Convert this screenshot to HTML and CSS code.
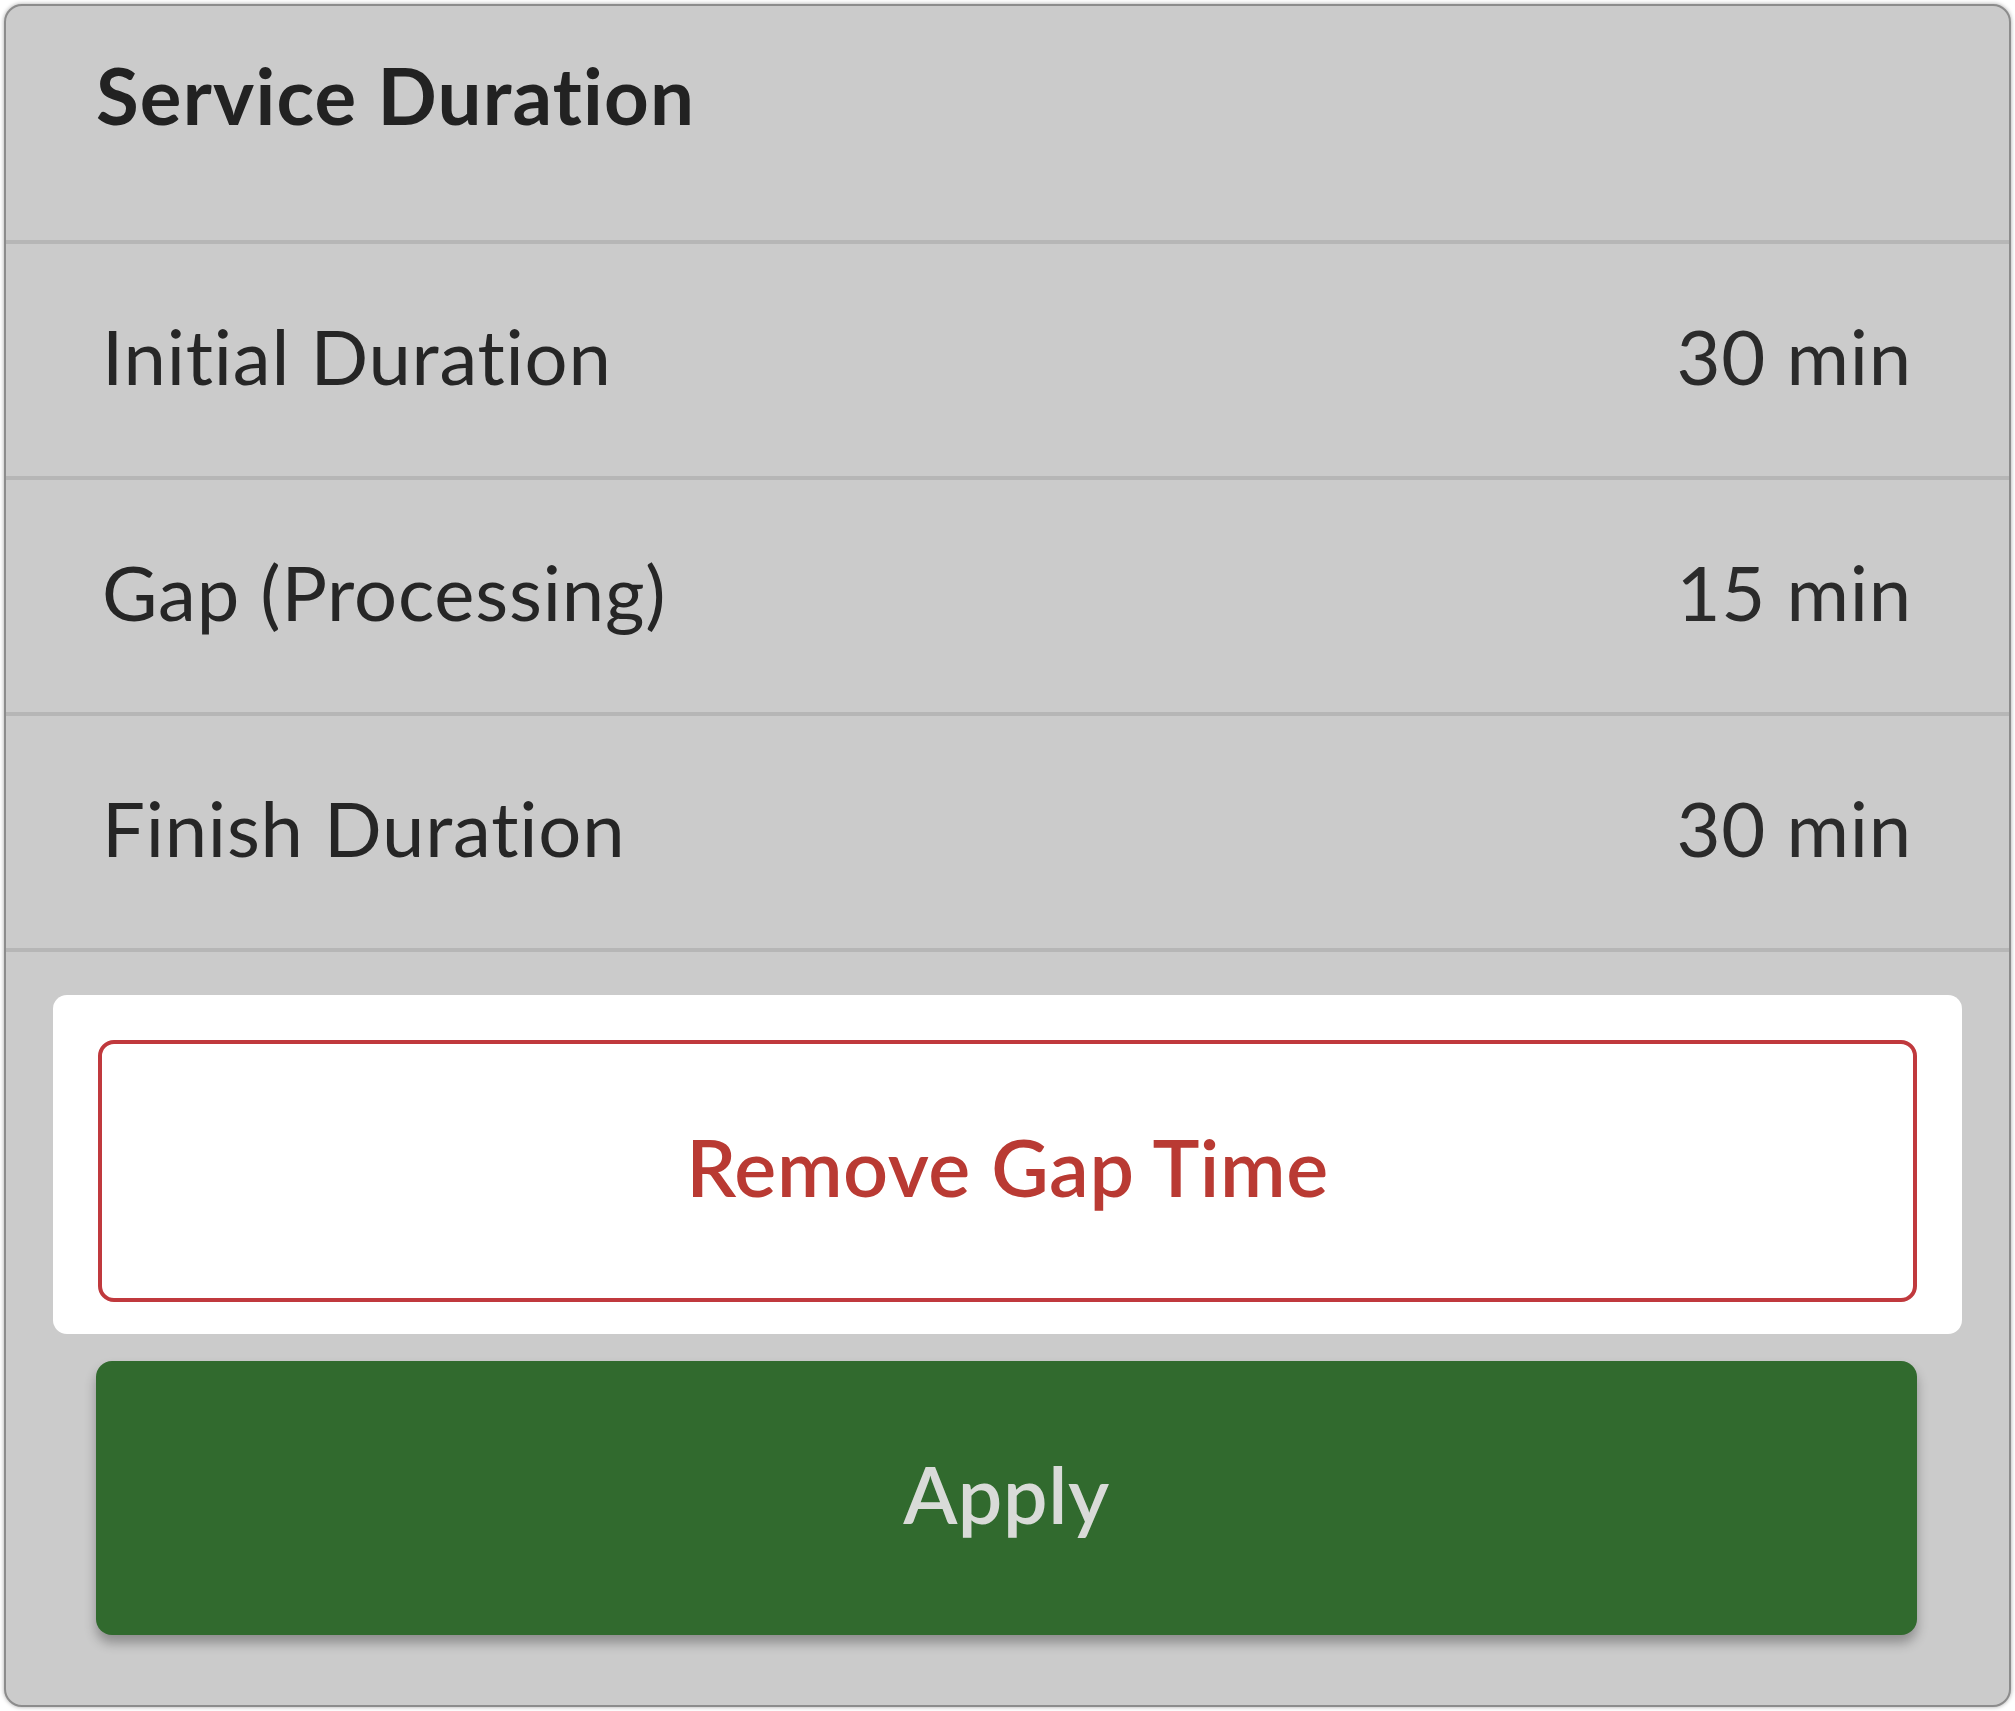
FILE: index.html
```html
<!DOCTYPE html>
<html lang="en">
<head>
    <meta charset="UTF-8">
    <meta name="viewport" content="width=device-width, initial-scale=1.0">
    <title>Service Duration</title>
    <link rel="stylesheet" href="styles.css">
</head>
<body>
    <div class="card">
        <div class="header">
            <h1>Service Duration</h1>
        </div>
        <div class="row">
            <span class="label">Initial Duration</span>
            <span class="value">30 min</span>
        </div>
        <div class="row">
            <span class="label">Gap (Processing)</span>
            <span class="value">15 min</span>
        </div>
        <div class="row">
            <span class="label">Finish Duration</span>
            <span class="value">30 min</span>
        </div>
        <div class="footer">
            <div class="highlight">
                <button class="btn btn-remove">Remove Gap Time</button>
            </div>
            <button class="btn btn-apply">Apply</button>
        </div>
    </div>
</body>
</html>
```

FILE: styles.css
```css
body {
    font-family: Lato, "Liberation Sans", sans-serif;
    font-variant-ligatures: none;
    margin: 0;
    padding: 0;
    background-color: #ffffff;
    color: #262626;
}

.card {
    box-sizing: border-box;
    width: 2007px;
    margin: 4px;
    background-color: #cbcbcb;
    border: 2px solid #8c8c8c;
    border-radius: 18px;
    box-shadow: 0 0 4px rgba(0, 0, 0, 0.35);
    overflow: hidden;
}

.header {
    height: 234px;
    box-sizing: border-box;
    padding: 50px 90px 0;
}

.header h1 {
    margin: 0;
    font-size: 78px;
    line-height: 1;
    font-weight: 700;
    letter-spacing: 1.2px;
    color: #222;
}

.row {
    display: flex;
    align-items: center;
    justify-content: space-between;
    box-sizing: border-box;
    height: 236px;
    padding: 0 97px 9px 96px;
    border-top: 4px solid #b6b6b6;
    font-size: 76px;
    line-height: 1;
    letter-spacing: 0.8px;
}

.label {
    color: #262626;
}

.value {
    color: #2b2b2b;
}

.footer {
    display: flex;
    flex-direction: column;
    border-top: 4px solid #b6b6b6;
    padding: 43px 47px 70px;
}

.highlight {
    background-color: #ffffff;
    border-radius: 14px;
    padding: 45px 45px 32px;
}

.btn {
    display: block;
    width: 100%;
    box-sizing: border-box;
    padding: 0 0 10px;
    font-family: inherit;
    font-variant-ligatures: none;
    font-size: 79px;
    font-weight: 600;
    letter-spacing: 0.6px;
    border-radius: 16px;
    cursor: pointer;
}

.btn-remove {
    height: 262px;
    background-color: #ffffff;
    border: 4px solid #c0393d;
    color: #b93a33;
}

.btn-apply {
    width: auto;
    height: 274px;
    margin: 27px 45px 0 43px;
    background-color: #316a2e;
    border: none;
    color: #d9dbd8;
    box-shadow: 0 8px 12px rgba(0, 0, 0, 0.3);
}
```
